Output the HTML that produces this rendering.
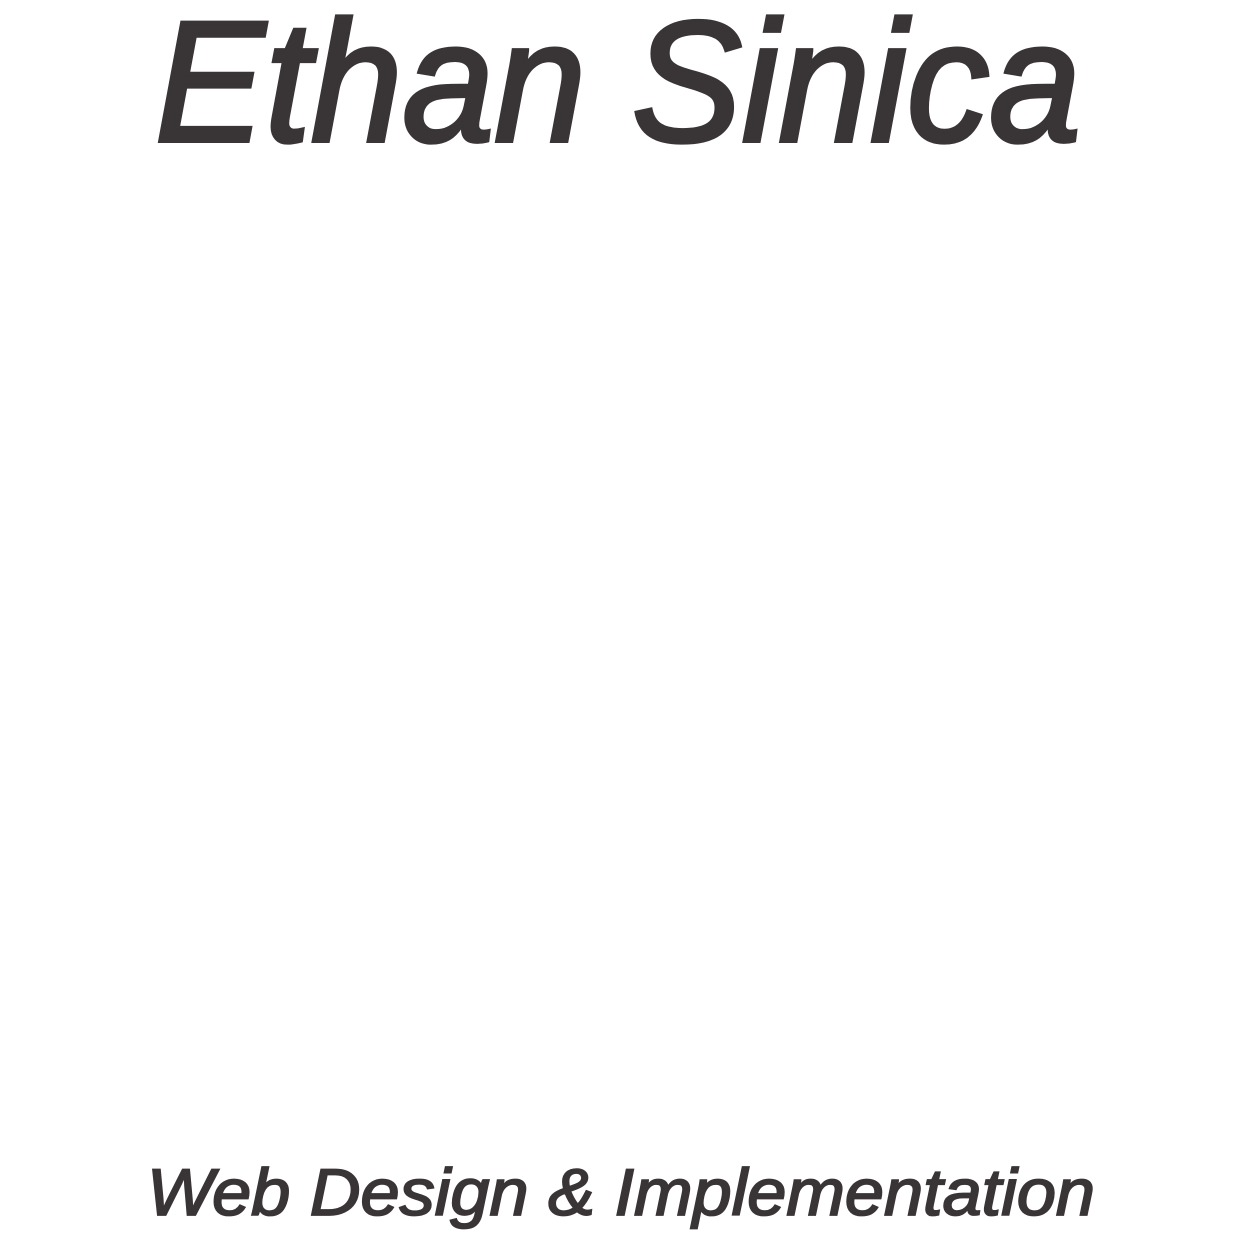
<!DOCTYPE html>
<html><head><meta charset="utf-8"><style>
html,body{margin:0;padding:0;background:#fff;width:1239px;height:1238px;overflow:hidden}
svg{display:block}
</style></head><body>
<svg width="1239" height="1238" viewBox="0 0 1239 1238" xmlns="http://www.w3.org/2000/svg">
<text x="155" y="141" font-family="Liberation Sans, sans-serif" font-style="italic" font-size="172" fill="#393436" textLength="926" lengthAdjust="spacingAndGlyphs" stroke="#393436" stroke-width="4">Ethan Sinica</text>
<text x="147" y="1215" font-family="Liberation Sans, sans-serif" font-style="italic" font-size="66" fill="#393436" textLength="948" lengthAdjust="spacingAndGlyphs" stroke="#393436" stroke-width="1.8">Web Design &amp; Implementation</text>
</svg>
</body></html>
